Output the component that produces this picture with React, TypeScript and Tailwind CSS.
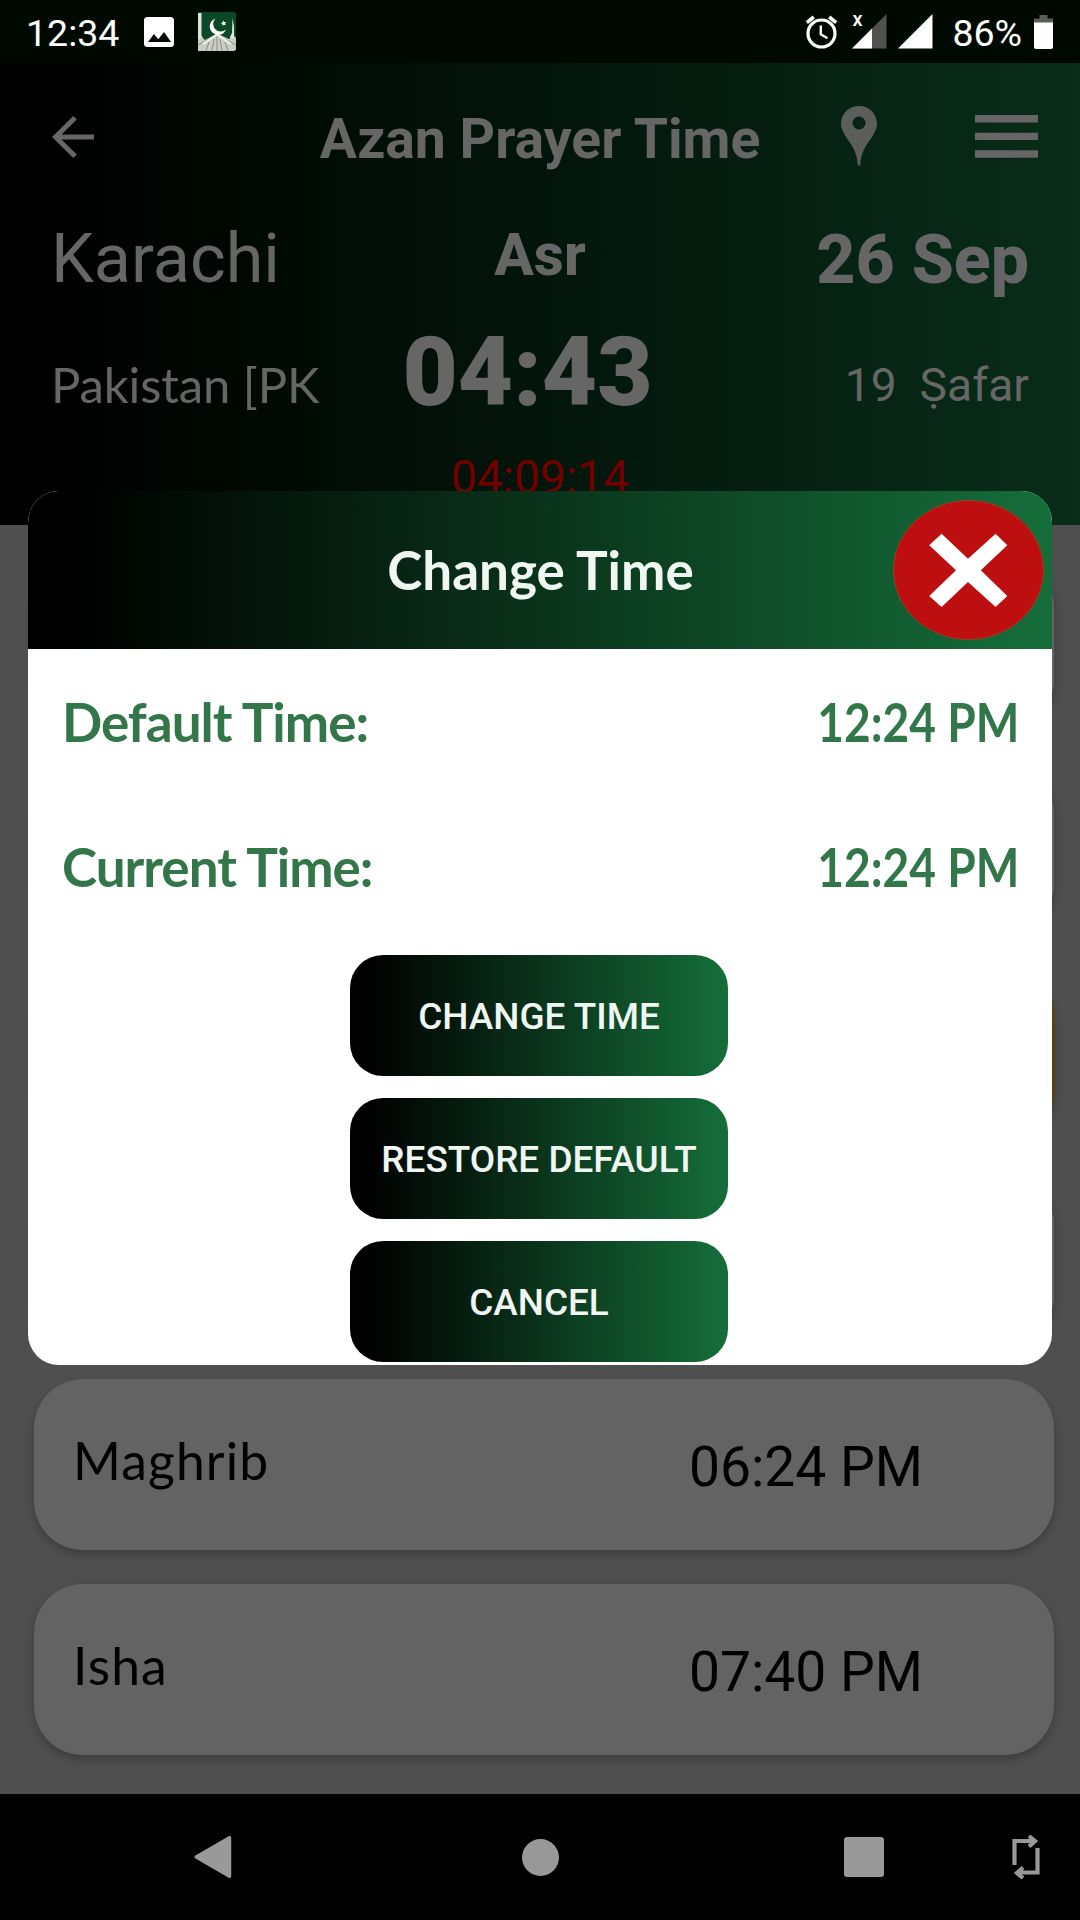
interface PrayerCard {
  id: number
  name?: string
  time?: string
  active?: boolean
}

const prayers: PrayerCard[] = [
  { id: 1 },
  { id: 2 },
  { id: 3, active: true },
  { id: 4 },
  { id: 5, name: 'Maghrib', time: '06:24 PM' },
  { id: 6, name: 'Isha', time: '07:40 PM' }
]

const StatusBar = () => (
  <div className="h-[63px] shrink-0 bg-[#000900] flex items-center justify-between pl-[26px] pr-[27px] text-white text-[37.5px] leading-none">
    <div className="flex items-center">
      <span className="w-[118px] pt-[4px]">12:34</span>
      <svg className="w-[30px] h-[30px]" viewBox="0 0 30 30">
        <rect width="30" height="30" rx="3.5" fill="#fff" />
        <path d="M4 25l6-8 4.300 5.200L20 15l7 10z" fill="#000900" />
      </svg>
      <svg className="w-[38px] h-[39px] ml-[24px]" viewBox="0 0 38 39">
        <rect width="38" height="39" rx="1.500" fill="#0a4726" />
        <path d="M0 1h3.500v22L6 30v9H0zM34.500 6L36 14v10l2 2v8l-6-2v-7l2-4z" fill="#dfe3dc" />
        <path d="M0 28l4-3 3 3 12-6.500L31 27l7-1v11.500L36 39H1.500L0 37.500z" fill="#c9cdc3" />
        <path d="M0 33l19-10 19 10M8 39l3-9M14 39l2-12M19 39V24M24 39l-2-12M30 39l-3-9" stroke="#8b9186" strokeWidth="1" fill="none" />
        <path d="M5 32L19 22.500 33 32" stroke="#f4f5f0" strokeWidth="1.800" fill="none" />
        <path d="M17.500 6.500a8.400 8.400 0 1 0 10.500 11 7.600 7.600 0 0 1-10.500-11z" fill="#fff" />
        <path d="M25 8.500l1.200 1.600 2-.2-1.200 1.600.8 1.800-1.900-.6-1.500 1.300.1-2-1.700-1.100 1.900-.5z" fill="#fff" />
      </svg>
    </div>
    <div className="flex items-center">
      <svg className="w-[33px] h-[34px]" viewBox="0 0 33 34" fill="none" stroke="#fff">
        <circle cx="16.500" cy="18.500" r="13.500" strokeWidth="3.200" />
        <path d="M1.800 7.600l7-5.600M31.200 7.600l-7-5.600" strokeWidth="3.600" />
        <path d="M15.800 10.500v8.800l6.700 4" strokeWidth="2.400" />
      </svg>
      <div className="relative w-[35px] h-[35px] ml-[14px]">
        <svg className="w-[35px] h-[35px]" viewBox="0 0 35 35">
          <path d="M34.500 0v34.500H0z" fill="#4f524f" />
          <path d="M20 14.500v20H0z" fill="#fff" />
        </svg>
        <span className="absolute left-0 -top-[4px] text-[20px] leading-[18px] font-medium">x</span>
      </div>
      <svg className="w-[35px] h-[35px] ml-[11px]" viewBox="0 0 35 35">
        <path d="M34.500 0v34.500H0z" fill="#fff" />
      </svg>
      <span className="ml-[19px] pt-[4px]">86%</span>
      <svg className="w-[19px] h-[34px] ml-[12px]" viewBox="0 0 19 34">
        <path d="M5.500 0h8v3.500H19V9H0V3.500h5.500z" fill="#5a5c5a" />
        <path d="M0 7.500h19V32a2 2 0 0 1-2 2H2a2 2 0 0 1-2-2z" fill="#fff" />
      </svg>
    </div>
  </div>
)

const Header = () => (
  <header className="h-[462px] shrink-0 bg-[linear-gradient(90deg,#000_0%,#000_4%,#03150b_50%,#092d19_100%)] text-[#666]">
    <div className="h-[152px] grid grid-cols-[300px_1fr_300px] items-center">
      <svg className="w-[43px] h-[42px] ml-[52px] -mt-[4px]" viewBox="0 0 43 42" fill="none" stroke="#666" strokeWidth="5">
        <path d="M42 21H4M23 1.800L3.500 21 23 40.200" />
      </svg>
      <h1 className="text-[55.3px] font-bold text-center whitespace-nowrap pt-[2px]">Azan Prayer Time</h1>
      <div className="flex items-center justify-between pl-[61px] pr-[42px]">
        <svg className="w-[36px] h-[60px] -mt-[6px]" viewBox="0 0 36 60">
          <path fillRule="evenodd" d="M18 0C8 0 0 7.800 0 17.500c0 5 2.300 9.300 5 13.500 4.800 7.300 10.500 13 11.800 27.500.2 1.700 2.200 1.700 2.400 0C20.500 44 26.200 38.300 31 31c2.700-4.200 5-8.500 5-13.500C36 7.800 28 0 18 0zm0 10.500a6.500 6.500 0 1 1 0 13 6.500 6.500 0 0 1 0-13z" fill="#5c5e5c" />
        </svg>
        <svg className="w-[63px] h-[43px] -mt-[5px]" viewBox="0 0 63 43" fill="#666">
          <path d="M0 0h63v7.500H0zM0 17.700h63V25H0zM0 35.200h63v7.500H0z" />
        </svg>
      </div>
    </div>
    <div className="h-[87px] grid grid-cols-3 items-center pl-[51px] pr-[51px] leading-none whitespace-nowrap">
      <span className="text-[68.3px] pt-[2px]">Karachi</span>
      <span className="text-[58.5px] font-extrabold text-center pb-[7px]">Asr</span>
      <span className="text-[68px] font-extrabold text-right pt-[2px]">26 Sep</span>
    </div>
    <div className="h-[140px] grid grid-cols-[1fr_auto_1fr] items-center pl-[51px] pr-[51px] leading-none whitespace-nowrap">
      <span className="font-[Lato] text-[49px] tracking-[-0.100px] pt-[24px]">Pakistan [PK</span>
      <span className="text-[95.500px] font-black mr-[25px] pt-px">04:43</span>
      <span className="text-[46.200px] text-right pt-[26px] whitespace-pre">19  Ṣafar</span>
    </div>
    <p className="h-[70px] leading-[71px] text-[46.200px] text-center text-[#720000]">04:09:14</p>
  </header>
)

const PrayerList = () => (
  <main className="flex-1 min-h-0 bg-[#4f4f4f] pt-[33px] pl-[34px] pr-[26px] flex flex-col gap-[34px] overflow-hidden">
    {prayers.map((prayer) => (
      <div
        key={prayer.id}
        className={`h-[171.2px] shrink-0 rounded-[49px] shadow-[0_4px_8px_rgba(0,0,0,0.25)] flex items-center justify-between pl-[39px] pr-[131px] text-black ${prayer.active ? 'bg-[#5e3f02]' : 'bg-[#636363]'}`}
      >
        {prayer.name && (
          <>
            <span className="font-[Lato] text-[51.6px] tracking-[1.1px] leading-none pb-[7px]">{prayer.name}</span>
            <span className="text-[55.2px] leading-none pt-[6px]">{prayer.time}</span>
          </>
        )}
      </div>
    ))}
  </main>
)

const NavBar = () => (
  <nav className="h-[126px] shrink-0 bg-black flex items-center text-[#999]">
    <svg className="w-[38px] h-[42px] ml-[194px]" viewBox="0 0 38 42">
      <path d="M35.500 1.800v38.400L2.300 21z" fill="#999" stroke="#999" strokeWidth="3.500" strokeLinejoin="round" />
    </svg>
    <div className="w-[37px] h-[37px] rounded-full bg-[#999] ml-[290px]" />
    <div className="w-[40px] h-[40px] rounded-[3px] bg-[#999] ml-[285px]" />
    <svg className="w-[28px] h-[46px] ml-[128px]" viewBox="0 0 28 46" fill="none" stroke="#999" strokeWidth="4.200">
      <path d="M2.500 31V7h20M17 2L23 7l-6 5.500" />
      <path d="M25.500 14v24.500h-20M11 33.500l-6 5.500 6 5" />
    </svg>
  </nav>
)

const DialogRow = ({ label, value }: { label: string; value: string }) => (
  <div className="h-full flex items-center justify-between pt-[2px]">
    <span className="tracking-[-1px]">{label}</span>
    <span className="origin-right scale-x-[0.870]">{value}</span>
  </div>
)

const DialogButton = ({ label }: { label: string }) => (
  <button className="w-[378px] h-[121.300px] rounded-[33px] bg-[linear-gradient(90deg,#000_0%,#000_4%,#0a331b_50%,#156e3a_100%)] text-[#f0f7f2] text-[36.900px] font-medium leading-none pt-[4px]">
    {label}
  </button>
)

const ChangeTimeDialog = () => (
  <div className="absolute left-[28px] top-[491px] w-[1024px] h-[874px] rounded-[31px] bg-white overflow-hidden">
    <div className="h-[158px] grid grid-cols-[160px_1fr_159px] items-center bg-[linear-gradient(90deg,#000_0%,#000_4%,#0a331b_50%,#156e3a_100%)]">
      <span />
      <h2 className="font-[Lato] font-bold text-[53px] leading-none text-[#f0f7f2] text-center pb-[2px]">Change Time</h2>
      <svg className="w-[151px] h-[140px]" viewBox="0 0 151 140">
        <ellipse cx="75.500" cy="70" rx="75" ry="69.500" fill="#bd0e10" stroke="#96412a" strokeWidth="1" />
        <path d="M36.200 45.300L48.600 33.700 75 58.700l27.600-25 11.700 11.600-26.500 25 26.500 25.700-11.700 11L75 82l-26.400 25-12.400-11L63 70.300z" fill="#fff" />
      </svg>
    </div>
    <div className="grid grid-rows-[142px_148px] pl-[34px] pr-[33px] font-[Lato] font-bold text-[53px] leading-none text-[#33764a]">
      <DialogRow label="Default Time:" value="12:24 PM" />
      <DialogRow label="Current Time:" value="12:24 PM" />
    </div>
    <div className="flex flex-col items-center gap-[21.700px] pt-[16px] pr-[2px]">
      <DialogButton label="CHANGE TIME" />
      <DialogButton label="RESTORE DEFAULT" />
      <DialogButton label="CANCEL" />
    </div>
  </div>
)

export default function App() {
  return (
    <div className="relative w-[1080px] h-[1920px] flex flex-col overflow-hidden font-[Roboto,sans-serif]">
      <StatusBar />
      <Header />
      <PrayerList />
      <NavBar />
      <ChangeTimeDialog />
    </div>
  )
}
